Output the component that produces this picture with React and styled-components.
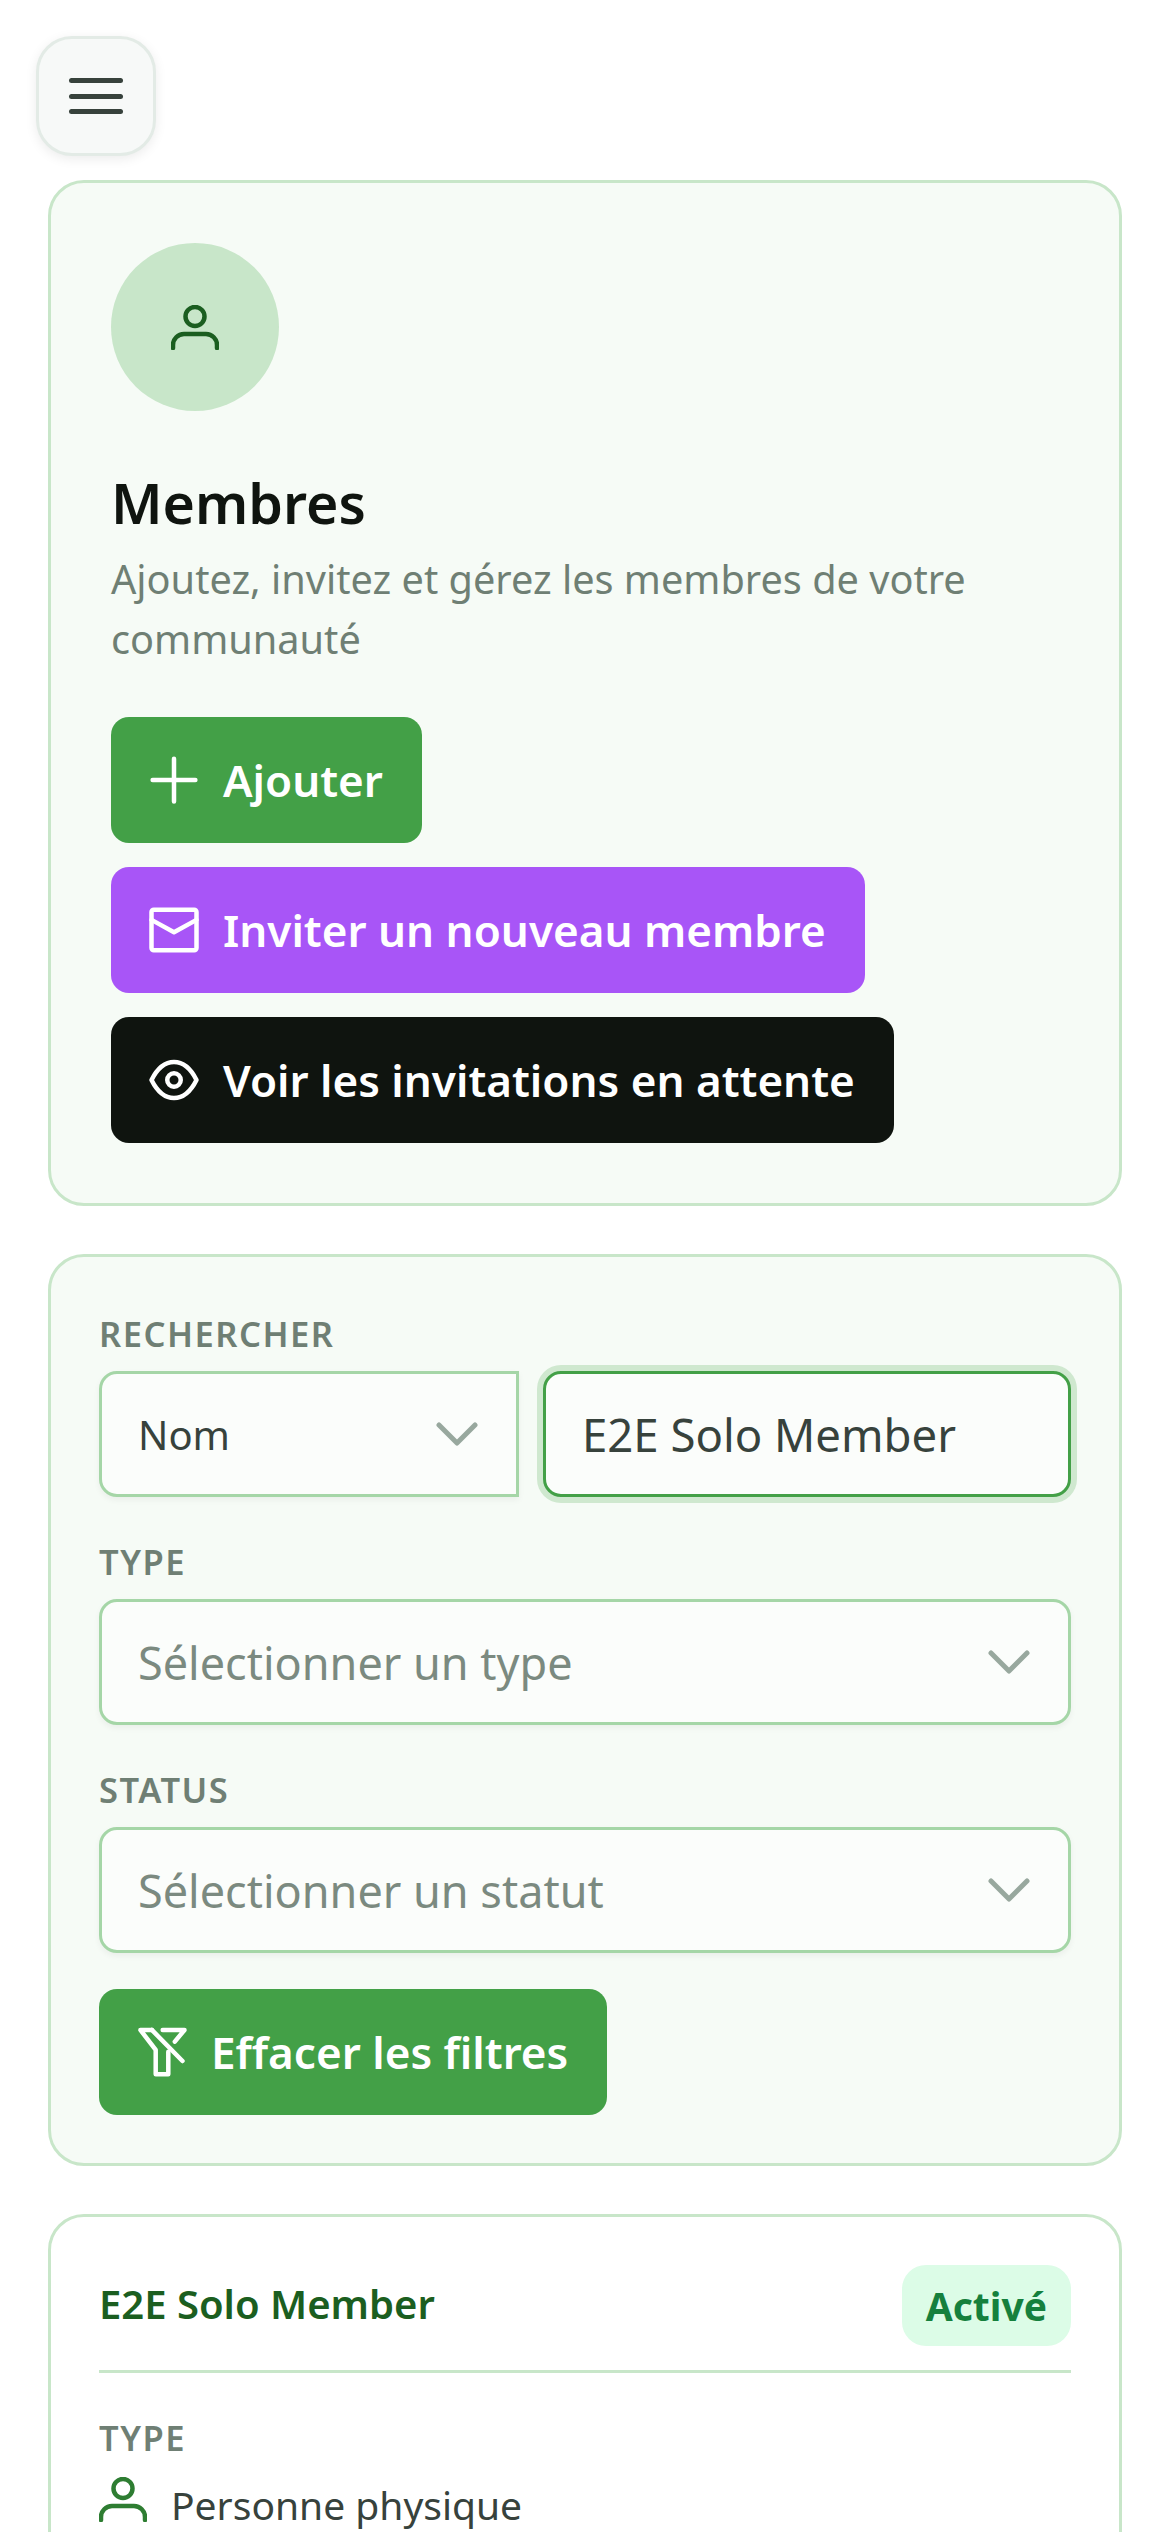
import React from 'react'
import styled, { createGlobalStyle } from 'styled-components'

const Global = createGlobalStyle`
  html, body {
    margin: 0;
    height: 2532px;
    overflow: hidden;
    background: #fff;
    font-family: "Noto Sans", "Open Sans", sans-serif;
  }
  * { box-sizing: border-box; }
`

function PersonIcon({ color }) {
  return (
    <svg width="48" height="45" viewBox="0 0 48 45" fill="none" stroke={color} strokeWidth="4.5" strokeLinecap="round">
      <circle cx="24" cy="11.5" r="9.5" />
      <path d="M2 43v-3a11 11 0 0 1 11-11h22a11 11 0 0 1 11 11v3" />
    </svg>
  )
}

function BtnIcon({ children }) {
  return (
    <IconBox viewBox="0 0 24 24" fill="none" stroke="#fff" strokeWidth="2" strokeLinecap="round" strokeLinejoin="round">
      {children}
    </IconBox>
  )
}

function Chevron() {
  return (
    <svg width="42" height="24" viewBox="0 0 42 24" fill="none" stroke="#98a89e" strokeWidth="5" strokeLinecap="round" strokeLinejoin="round">
      <path d="M3 3l18 18L39 3" />
    </svg>
  )
}

export default function App() {
  return (
    <Page>
      <Global />
      <MenuButton aria-label="Menu">
        <Bar /><Bar /><Bar />
      </MenuButton>
      <Main>
        <HeroCard>
          <Avatar><PersonIcon color="#1b5e20" /></Avatar>
          <Title>Membres</Title>
          <Subtitle>Ajoutez, invitez et gérez les membres de votre communauté</Subtitle>
          <Actions>
            <Button $bg="#43a047">
              <BtnIcon><path d="M12 2.500v19M2.500 12h19" /></BtnIcon>
              Ajouter
            </Button>
            <Button $bg="#a855f7">
              <BtnIcon>
                <rect x="2" y="3" width="20" height="18" rx="1" />
                <path d="M2 7.500l10 5.500 10-5.500" />
              </BtnIcon>
              Inviter un nouveau membre
            </Button>
            <Button $bg="#0f140f">
              <BtnIcon>
                <path d="M2 12c2.500-5 6-8 10-8s7.500 3 10 8c-2.500 5-6 8-10 8s-7.500-3-10-8z" />
                <circle cx="12" cy="12" r="3" />
              </BtnIcon>
              Voir les invitations en attente
            </Button>
          </Actions>
        </HeroCard>

        <FilterCard>
          <Label>Rechercher</Label>
          <SearchRow>
            <Select $square>
              <Value>Nom</Value>
              <Chevron />
            </Select>
            <SearchInput readOnly value="E2E Solo Member" />
          </SearchRow>

          <Label>Type</Label>
          <Select>
            <Placeholder>Sélectionner un type</Placeholder>
            <Chevron />
          </Select>

          <Label>Status</Label>
          <Select>
            <Placeholder>Sélectionner un statut</Placeholder>
            <Chevron />
          </Select>

          <Button $bg="#43a047">
            <BtnIcon>
              <path d="M12.300 2.200H22l-4.300 5.200" />
              <path d="M7.500 2.200H2.400l6.800 8.900v10.800h5.600V11.900" />
              <path d="M7.500 2.200L21.100 16" />
            </BtnIcon>
            Effacer les filtres
          </Button>
        </FilterCard>

        <MemberCard>
          <MemberHead>
            <MemberName>E2E Solo Member</MemberName>
            <Badge>Activé</Badge>
          </MemberHead>
          <MemberLabel>Type</MemberLabel>
          <TypeRow>
            <PersonIcon color="#2e7d32" />
            <TypeText>Personne physique</TypeText>
          </TypeRow>
        </MemberCard>
      </Main>
    </Page>
  )
}

const Page = styled.div`
  width: 1170px;
  height: 2532px;
  overflow: hidden;
  padding-top: 36px;
`

const MenuButton = styled.button`
  display: flex;
  flex-direction: column;
  align-items: center;
  justify-content: center;
  gap: 10.500px;
  width: 120px;
  height: 120px;
  margin-left: 36px;
  padding: 0;
  background: #f7f9f8;
  border: 3px solid #e3ebe6;
  border-radius: 36px;
  box-shadow: 0 3px 12px rgba(0, 0, 0, 0.08);
`

const Bar = styled.span`
  width: 54px;
  height: 5px;
  border-radius: 3px;
  background: #37423c;
`

const Main = styled.main`
  display: flex;
  flex-direction: column;
  gap: 48px;
  padding: 24px 48px 0;
`

const Card = styled.section`
  border: 3px solid #c8e6c9;
  border-radius: 36px;
  background: #f6fbf6;
`

const HeroCard = styled(Card)`
  padding: 60px;
`

const Avatar = styled.div`
  display: flex;
  align-items: center;
  justify-content: center;
  width: 168px;
  height: 168px;
  border-radius: 50%;
  background: #c8e6c9;
`

const Title = styled.h1`
  margin: 50px 0 0;
  font-size: 55.500px;
  line-height: 84px;
  font-weight: 600;
  color: #0f140f;
`

const Subtitle = styled.p`
  margin: 4px 0 0;
  font-size: 39.700px;
  line-height: 60px;
  color: #6f7f74;
`

const Actions = styled.div`
  display: flex;
  flex-direction: column;
  align-items: flex-start;
  gap: 24px;
  margin-top: 48px;
`

const Button = styled.button`
  display: flex;
  align-items: center;
  gap: 22px;
  height: 126px;
  padding: 0 39px 0 36px;
  border: 0;
  border-radius: 18px;
  background: ${p => p.$bg};
  color: #fff;
  font-family: inherit;
  font-size: 44px;
  font-weight: 600;
  white-space: nowrap;
`

const IconBox = styled.svg`
  width: 54px;
  height: 54px;
  flex: none;
`

const FilterCard = styled(Card)`
  padding: 48px;
`

const Label = styled.div`
  height: 66px;
  padding-top: 5px;
  font-size: 34.500px;
  line-height: 48px;
  font-weight: 600;
  letter-spacing: 1.500px;
  text-transform: uppercase;
  color: #6f7f74;
`

const SearchRow = styled.div`
  display: flex;
  gap: 24px;
  margin-bottom: 36px;
`

const Select = styled.div`
  display: flex;
  align-items: center;
  justify-content: space-between;
  flex: ${p => (p.$square ? '0 0 420px' : 'none')};
  height: 126px;
  padding: 0 38px 0 36px;
  margin-bottom: ${p => (p.$square ? '0' : '36px')};
  background: #fbfdfb;
  border: 3px solid #a5d6a7;
  border-radius: ${p => (p.$square ? '18px 0 0 18px' : '18px')};
  box-shadow: 0 3px 6px rgba(0, 0, 0, 0.05);
`

const Value = styled.span`
  font-size: 40px;
  color: #37423c;
`

const Placeholder = styled.span`
  font-size: 45px;
  color: #7b8a80;
`

const SearchInput = styled.input`
  flex: 1;
  min-width: 0;
  height: 126px;
  padding: 0 36px;
  background: #fbfdfb;
  border: 3px solid #43a047;
  border-radius: 18px;
  outline: none;
  box-shadow: 0 0 0 6px #cfe8cf;
  font-family: inherit;
  font-size: 45.500px;
  color: #37423c;
`

const MemberCard = styled(Card)`
  height: 600px;
  padding: 48px;
  background: #fff;
`

const MemberHead = styled.div`
  display: flex;
  align-items: center;
  justify-content: space-between;
  padding-bottom: 24px;
  border-bottom: 3px solid #c8e6c9;
`

const MemberName = styled.div`
  margin-top: -5px;
  font-size: 40px;
  font-weight: 600;
  color: #1b5e20;
`

const Badge = styled.span`
  display: flex;
  align-items: center;
  height: 81px;
  padding: 0 24px;
  border-radius: 24px;
  background: #dcfce7;
  color: #15803d;
  font-size: 39px;
  font-weight: 700;
`

const MemberLabel = styled(Label)`
  margin-top: 36px;
  height: 68px;
`

const TypeRow = styled.div`
  display: flex;
  align-items: flex-start;
  gap: 24px;
  font-size: 39px;
  color: #37423c;
`

const TypeText = styled.span`
  margin-top: 5px;
  line-height: 46px;
`
